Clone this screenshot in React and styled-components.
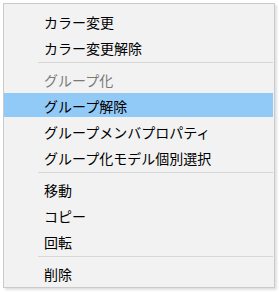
import React from 'react'
import styled, { createGlobalStyle } from 'styled-components'

const GlobalStyle = createGlobalStyle`
  html, body {
    margin: 0;
    padding: 0;
    background: #ffffff;
  }
  body {
    font-family: "Noto Sans CJK JP", "Noto Sans", sans-serif;
  }
`

const groups = [
  [{ label: 'カラー変更' }, { label: 'カラー変更解除' }],
  [
    { label: 'グループ化', disabled: true },
    { label: 'グループ解除', active: true },
    { label: 'グループメンバプロパティ' },
    { label: 'グループ化モデル個別選択' },
  ],
  [{ label: '移動' }, { label: 'コピー' }, { label: '回転' }],
  [{ label: '削除' }],
]

const App = () => {
  return (
    <>
      <GlobalStyle />
      <Page>
        <Menu role="menu">
          {groups.map((group, gi) => (
            <React.Fragment key={gi}>
              {gi > 0 && <Separator />}
              {group.map((item) => (
                <Item key={item.label}>
                  <Label $active={item.active} $disabled={item.disabled}>
                    {item.label}
                  </Label>
                </Item>
              ))}
            </React.Fragment>
          ))}
        </Menu>
      </Page>
    </>
  )
}

export default App

const Page = styled.div`
  padding: 3px 0 0 3px;
  height: 292px;
  box-sizing: border-box;
`

const Menu = styled.ul`
  list-style: none;
  margin: 0;
  width: 272px;
  box-sizing: border-box;
  padding: 4px 1px 1px 0;
  background: #f2f2f2;
  border: 1px solid #cbcbcb;
  box-shadow: 2px 2px 2px rgba(0, 0, 0, 0.12);
`

const Item = styled.li`
  height: 26px;
  box-sizing: border-box;
  padding: 1px 0;
`

const Label = styled.span`
  display: flex;
  align-items: center;
  height: 24px;
  box-sizing: border-box;
  padding: 2px 0 0 40px;
  background: ${(p) => (p.$active ? '#91c9f7' : 'transparent')};
  font-size: 14px;
  line-height: 22px;
  color: ${(p) => (p.$disabled ? '#7a7a7a' : '#000000')};
  white-space: nowrap;
`

const Separator = styled.li`
  height: 6px;
  display: flex;
  align-items: flex-start;
  padding: 2px 0 0 34px;
  box-sizing: border-box;

  &::after {
    content: '';
    flex: 1;
    height: 1px;
    background: #d7d7d7;
  }
`
